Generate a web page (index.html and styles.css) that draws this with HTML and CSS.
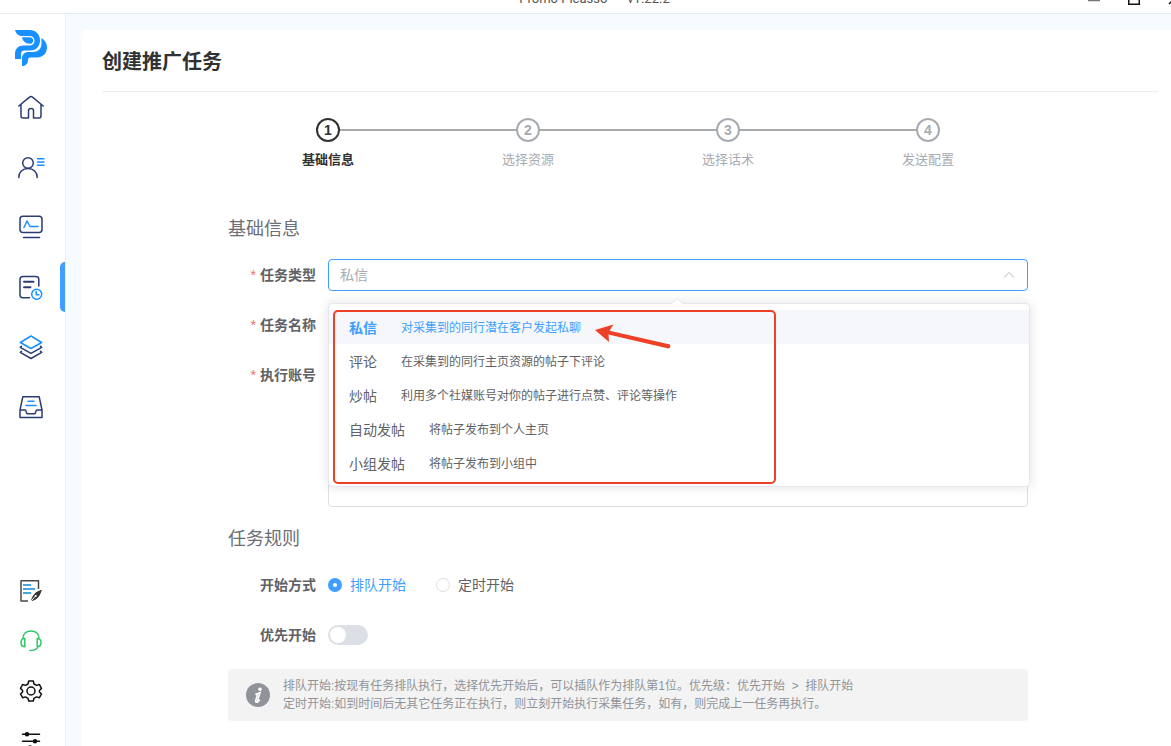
FILE: index.html
```html
<!DOCTYPE html>
<html lang="zh-CN">
<head>
<meta charset="utf-8">
<title>Promo Picasso</title>
<link rel="stylesheet" href="styles.css">
</head>
<body>
<div class="app">
  <header class="titlebar">
    <div class="titlebar-name"><span>Promo Picasso</span><span>v1.22.2</span></div>
    <div class="window-buttons">
      <button type="button" aria-label="最小化"><svg viewBox="0 0 12 12"><path d="M0 7.500H12" stroke="#777"/></svg></button>
      <button type="button" aria-label="最大化"><svg viewBox="0 0 12 12"><rect x="0.750" y="0.750" width="10.500" height="10.500"/></svg></button>
      <button type="button" aria-label="关闭"><svg viewBox="0 0 12 12"><path d="M1 1 11 11M11 1 1 11"/></svg></button>
    </div>
  </header>
  <div class="body">
    <nav class="sidebar">
      <svg class="logo" viewBox="0 0 32 36" fill="#1890ff">
        <path d="M0 0H14.500C21 0 25 4.500 25 10.200C25 16.500 21 20.500 15 20.500H9.500C7.500 20.500 6 21.500 6 24V29H0V24C0 18.500 3.500 15.500 8.500 15.500H14.500C17.700 15.500 19.500 13.500 19.500 10.700C19.500 7.800 17.500 6 14.500 6H7C3.500 6 1 3.800 0 0Z"/>
        <path d="M7 7.300H14.500C17 7.300 18.200 8.800 18.200 10.700C18.200 12.700 16.800 13.800 14.500 13.800C10.500 13.500 7.500 11 7 7.300Z"/>
        <path d="M26.300 8C30 10 32 13.500 32 17.300C32 23.500 27.700 27.500 22 27.500H15.500C13.700 27.500 13 28.500 13 30C13 33.500 11 36 7 36V28.500C7 24.500 9.500 22 13.500 22H18.500C23.500 22 26.500 18 26.500 13.500C26.500 11.500 26.500 10 26.300 8Z"/>
      </svg>
      <a class="nav-item" href="#" aria-label="首页"><svg viewBox="0 0 32 32"><path d="M3.800 15 14.500 6.200Q16 5 17.500 6.200L28.200 15M6 13.500V25Q6 27 8 27H13.500V19.500Q13.500 17.500 16 17.500T18.500 19.500V27H24Q26 27 26 25V13.500"/></svg></a>
      <a class="nav-item" href="#" aria-label="账号"><svg viewBox="0 0 32 32"><circle cx="13" cy="12" r="5.300"/><path d="M3.800 26.500C3.800 21 7.500 17.500 13 17.500S22.200 21 22.200 26.500"/><path class="blue" d="M22.500 7.700H29M22.500 11H29M22.500 14.200H29"/></svg></a>
      <a class="nav-item" href="#" aria-label="监控"><svg viewBox="0 0 32 32"><rect x="5" y="5.200" width="22" height="16.300" rx="3"/><path d="M8.500 26.500H24.500"/><path class="blue" d="M9 16.500 12 10 15 15.500H23"/></svg></a>
      <a class="nav-item nav-item-active" href="#" aria-label="任务"><svg viewBox="0 0 32 32"><path d="M23.800 15V8.500Q23.800 5.500 20.800 5.500H8Q5 5.500 5 8.500V24Q5 26.700 7.700 26.700H14.500"/><path d="M9 10.700H18.500M9 16.300H15.500" stroke-width="1.900"/><circle class="blue" cx="21.700" cy="23.200" r="5"/><path class="blue" d="M21.200 20.500V23.700H24"/></svg></a>
      <a class="nav-item" href="#" aria-label="资源"><svg viewBox="0 0 32 32"><path class="blue" d="M16 5 26.700 11.500 16 17.500 5.300 11.500Z"/><path d="M6.500 15.300 5.300 16.300 16 22.300 26.700 16.300 25.500 15.300M6.500 20.300 5.300 21.300 16 27.500 26.700 21.300 25.500 20.300"/></svg></a>
      <a class="nav-item" href="#" aria-label="收件箱"><svg viewBox="0 0 32 32"><path d="M7.800 5.800H24.200L27 19V26.500H5V19Z M5 19H10.500L12 22.700H20L21.500 19H27"/><path class="blue" d="M13 10.300H19M11 14.500H21"/></svg></a>
      <div class="nav-bottom">
        <a class="nav-item" href="#" aria-label="记录"><svg viewBox="0 0 32 32"><path class="gray" d="M13 26H6V5.700H23.500V14"/><path class="sky" d="M8 10H16M8 14H20M8 18H16"/><path d="M26 15.500C20.500 17 18 20 16.500 25.500 22.500 24.500 24.800 20.500 26 15.500Z" fill="#333" stroke="#333" stroke-width="1"/><path d="M16.500 25.500 21 20.500" stroke="#fff" stroke-width="1"/><circle cx="20.700" cy="21" r="1" fill="#fff" stroke="none"/></svg></a>
        <a class="nav-item" href="#" aria-label="客服"><svg class="green" viewBox="0 0 32 32"><path d="M8 13.500C8 8.500 11.500 6 16 6S24 8.500 24 13.500M9.800 13.500V21.700C7 21.700 6 19.500 6 17.500S7 13.500 9.800 13.500ZM22.200 13.500V21.700C25 21.700 26 19.500 26 17.500S25 13.500 22.200 13.500ZM23 21.700C22 24 19.500 25.500 15 25.500"/></svg></a>
        <a class="nav-item" href="#" aria-label="设置"><svg class="black" viewBox="0 0 32 32"><path d="M13.700 6H18.300L19 9 21.500 10.400 24.400 9.500 26.500 13.400 24.400 15.500V17L26.500 19 24.400 22.700 21.500 21.900 19 23.300 18.300 26H13.700L13 23.300 10.500 21.900 7.600 22.700 5.500 19 7.600 17V15.500L5.500 13.400 7.600 9.500 10.500 10.400 13 9Z"/><circle cx="16" cy="16" r="4"/></svg></a>
        <a class="nav-item" href="#" aria-label="选项"><svg class="black" viewBox="0 0 32 32"><path d="M7.500 9.200H24.500M7.500 16.200H24.500M7.500 23.200H24.500"/><g fill="#111"><circle cx="12" cy="9.200" r="1.500"/><circle cx="20" cy="16.200" r="1.500"/><circle cx="15" cy="22.500" r="1.500"/></g></svg></a>
      </div>
    </nav>
    <main class="page">
      <section class="card">
        <h1>创建推广任务</h1>
        <div class="content">
          <ol class="steps">
            <li class="step step-current"><span class="step-number">1</span><span>基础信息</span></li>
            <li class="step"><span class="step-number">2</span><span>选择资源</span></li>
            <li class="step"><span class="step-number">3</span><span>选择话术</span></li>
            <li class="step"><span class="step-number">4</span><span>发送配置</span></li>
          </ol>
          <form>
            <h2>基础信息</h2>
            <div class="row">
              <label class="row-label required" for="task-type">任务类型</label>
              <div class="field">
                <select id="task-type" class="control select"><option>私信</option></select>
                <svg class="chevron" viewBox="0 0 12 12"><path d="M1 8.500 6 3.500 11 8.500"/></svg>
                <div class="menu" role="listbox" aria-label="任务类型">
                  <svg class="menu-tip" viewBox="0 0 12 6"><path d="M0 6 6 0.500 12 6"/></svg>
                  <button type="button" role="option" aria-selected="true" class="option option-selected"><span>私信</span><small>对采集到的同行潜在客户发起私聊</small></button>
                  <button type="button" role="option" class="option"><span>评论</span><small>在采集到的同行主页资源的帖子下评论</small></button>
                  <button type="button" role="option" class="option"><span>炒帖</span><small>利用多个社媒账号对你的帖子进行点赞、评论等操作</small></button>
                  <button type="button" role="option" class="option"><span>自动发帖</span><small>将帖子发布到个人主页</small></button>
                  <button type="button" role="option" class="option"><span>小组发帖</span><small>将帖子发布到小组中</small></button>
                  <div class="highlight"></div>
                  <svg class="pointer" viewBox="0 0 76 28"><path d="M0 9 18.500 3.500 14.500 9.700 75 23.500Q76 26.500 73.500 27.500L13.500 13.500 14 21Z"/></svg>
                </div>
              </div>
            </div>
            <div class="row">
              <label class="row-label required" for="task-name">任务名称</label>
              <div class="field"><input id="task-name" class="control" type="text"></div>
            </div>
            <div class="row">
              <label class="row-label required" for="accounts">执行账号</label>
              <div class="field"><textarea id="accounts" class="control accounts"></textarea></div>
            </div>
            <h2>任务规则</h2>
            <fieldset class="row">
              <legend class="row-label">开始方式</legend>
              <div class="field radios">
                <label class="radio"><input type="radio" name="start" checked><span>排队开始</span></label>
                <label class="radio"><input type="radio" name="start"><span>定时开始</span></label>
              </div>
            </fieldset>
            <div class="row">
              <label class="row-label" for="priority">优先开始</label>
              <div class="field radios"><input id="priority" class="switch" type="checkbox" role="switch"></div>
            </div>
          </form>
          <aside class="notice">
            <svg viewBox="0 0 24 24"><circle cx="12" cy="12" r="12" fill="#909399"/><circle cx="14" cy="6.300" r="1.800" fill="#fff"/><path d="M9.300 11.200Q12 10.700 14 9.800L11.600 17.600Q11.500 18.900 14 16.900M9.500 11.400Q11.500 11 11.300 12.300L9.700 17.500Q9.400 20.300 12.200 18.800" fill="none" stroke="#fff" stroke-width="1.600"/></svg>
            <p>排队开始:按现有任务排队执行，选择优先开始后，可以插队作为排队第1位。优先级：优先开始&nbsp; &gt; &nbsp;排队开始<br>定时开始:如到时间后无其它任务正在执行，则立刻开始执行采集任务，如有，则完成上一任务再执行。</p>
          </aside>
        </div>
      </section>
    </main>
  </div>
</div>
</body>
</html>
```
FILE: styles.css
```css
* {
  box-sizing: border-box;
}

body {
  margin: 0;
  height: 100vh;
  overflow: hidden;
  background: #fff;
  color: #606266;
  font: 14px/20px "Liberation Sans", "Noto Sans CJK SC", sans-serif;
}

button, input, select, textarea {
  font: inherit;
  color: inherit;
}

/* The window title bar is partly scrolled above the viewport. */
.app {
  display: flex;
  flex-direction: column;
  height: calc(100vh + 16px);
  margin-top: -16px;
}

.titlebar {
  flex: none;
  display: flex;
  align-items: center;
  justify-content: center;
  position: relative;
  height: 30px;
  padding-left: 18px;
  border-bottom: 1px solid #e9eaec;
}

.titlebar-name {
  display: flex;
  gap: 20px;
  color: #555;
  font-family: Roboto, sans-serif;
  font-size: 13px;
}

.window-buttons {
  position: absolute;
  right: -9px;
  top: 9px;
  display: flex;
  gap: 28px;
}

.window-buttons button {
  padding: 0;
  border: 0;
  background: none;
}

.window-buttons svg {
  display: block;
  width: 12px;
  height: 12px;
  fill: none;
  stroke: #111;
  stroke-width: 1.5;
}

.body {
  flex: 1;
  display: flex;
  min-height: 0;
}

.sidebar {
  flex: none;
  display: flex;
  flex-direction: column;
  align-items: center;
  width: 66px;
  padding: 16px 4px 0 0;
  border-right: 1px solid #e9eef2;
}

.logo {
  flex: none;
  width: 32px;
  height: 36px;
  margin-bottom: 11px;
}

.nav-item {
  flex: none;
  display: grid;
  place-items: center;
  height: 60px;
}

.nav-item svg {
  width: 32px;
  height: 32px;
  fill: none;
  stroke: #2b3c74;
  stroke-width: 1.5;
  stroke-linecap: round;
  stroke-linejoin: round;
}

.nav-item .blue { stroke: #1890ff; }
.nav-item .gray { stroke: #4a4a4a; stroke-linecap: butt; }
.nav-item .sky { stroke: #45a7e0; stroke-width: 2; stroke-linecap: butt; }
.nav-item .green { stroke: #2dc866; }
.nav-item .black { stroke: #111; }

.nav-item-active {
  position: relative;
}

.nav-item-active::after {
  content: "";
  position: absolute;
  left: 45px;
  top: 5px;
  width: 5px;
  height: 50px;
  border-radius: 5px 0 0 5px;
  background: #409eff;
}

.nav-bottom {
  margin-top: auto;
  margin-bottom: -20px;
}

.nav-bottom .nav-item {
  height: 50px;
}

.page {
  flex: 1;
  min-width: 0;
  padding: 16px 0 0 16px;
  background: #f5fbff;
}

.card {
  height: 100%;
  padding: 17px 13px 0 20px;
  border-radius: 5px 0 0 0;
  background: #fff;
}

h1 {
  margin: 0;
  padding-bottom: 14px;
  border-bottom: 1px solid #ebeef0;
  color: #303133;
  font-size: 20px;
  line-height: 30px;
}

.content {
  max-width: 804px;
  margin: 0 auto;
  padding: 26px 4px 0 0;
}

.steps {
  display: flex;
  margin: 0 0 45px;
  padding: 0;
  list-style: none;
}

.step {
  flex: 1;
  display: flex;
  flex-direction: column;
  align-items: center;
  gap: 8px;
  position: relative;
  color: #a8abb2;
  font-size: 13px;
}

.step + .step::before {
  content: "";
  position: absolute;
  top: 11px;
  right: calc(50% + 12px);
  width: calc(100% - 24px);
  height: 2px;
  background: #a8abad;
}

.step-number {
  width: 24px;
  border: 2px solid;
  border-radius: 50%;
  font-size: 14px;
  font-weight: bold;
  text-align: center;
}

.step-current {
  color: #303133;
  font-weight: bold;
}

h2 {
  margin: 0 0 16px;
  font-size: 18px;
  font-weight: normal;
  line-height: 28px;
  color: #6b6e76;
}

.row {
  display: flex;
  margin: 0 0 18px;
  padding: 0;
  border: 0;
}

.row-label {
  flex: none;
  float: left;
  width: 100px;
  padding: 0 12px 0 0;
  font-weight: bold;
  line-height: 32px;
  text-align: right;
}

.required::before {
  content: "*";
  margin-right: 4px;
  color: #f56c6c;
  font-weight: normal;
}

.field {
  flex: 1;
  position: relative;
  min-width: 0;
}

fieldset.row {
  display: block;
}

.control {
  display: block;
  width: 100%;
  height: 32px;
  padding: 0 11px;
  border: 1px solid #dcdfe6;
  border-radius: 4px;
  outline: 0;
  background: #fff;
}

.accounts {
  height: 148px;
  resize: none;
}

.select {
  appearance: none;
  border-color: #409eff;
  color: #a8abb2;
}

.chevron {
  position: absolute;
  right: 13px;
  top: 10px;
  width: 12px;
  height: 12px;
  fill: none;
  stroke: #b4b8bf;
}

.menu {
  position: absolute;
  z-index: 1;
  top: 44px;
  left: 0;
  right: -2px;
  padding: 6px 0;
  border: 1px solid #e4e7ed;
  border-radius: 4px;
  background: #fff;
  box-shadow: 0 0 12px rgba(0, 0, 0, 0.12);
}

.menu-tip {
  position: absolute;
  top: -6px;
  left: calc(50% - 8px);
  width: 12px;
  height: 6px;
  fill: #fff;
  stroke: #e4e7ed;
}

.option {
  display: flex;
  align-items: center;
  gap: 24px;
  width: 100%;
  height: 34px;
  padding: 2px 20px 0;
  border: 0;
  background: none;
}

.option small {
  font-size: 12px;
}

.option-selected {
  background: #f5f7fa;
  color: #409eff;
}

.option-selected span {
  font-weight: bold;
}

.highlight {
  position: absolute;
  top: 6px;
  bottom: 2px;
  left: 4px;
  width: 443px;
  border: 2px solid #ee4026;
  border-radius: 5px;
}

.pointer {
  position: absolute;
  top: 17px;
  left: 266px;
  width: 76px;
  height: 28px;
  fill: #ee4026;
}

.radios {
  display: flex;
  align-items: center;
  gap: 30px;
  height: 32px;
}

.radio {
  display: flex;
  align-items: center;
  gap: 8px;
}

.radio input {
  appearance: none;
  width: 14px;
  height: 14px;
  margin: 0;
  border: 1px solid #dcdfe6;
  border-radius: 50%;
}

.radio input:checked {
  border: 5px solid #409eff;
}

.radio input:checked + span {
  color: #409eff;
}

.switch {
  appearance: none;
  width: 40px;
  height: 20px;
  margin: 0;
  padding: 2px;
  border-radius: 10px;
  background: #dcdfe6;
}

.switch::before {
  content: "";
  display: block;
  width: 16px;
  height: 16px;
  border-radius: 50%;
  background: #fff;
}

.notice {
  display: flex;
  align-items: center;
  gap: 13px;
  padding: 8px 18px;
  border-radius: 4px;
  background: #f3f3f3;
  color: #909399;
  font-size: 12px;
  line-height: 18px;
}

.notice svg {
  flex: none;
  width: 24px;
  height: 24px;
}

.notice p {
  margin: 0;
}
```
